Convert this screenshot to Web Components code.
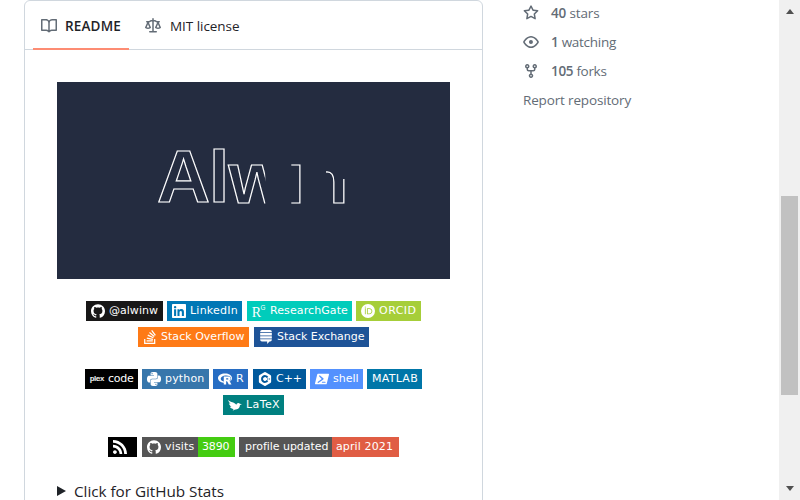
<!DOCTYPE html>
<html lang="en"><head><meta charset="utf-8"><title>alwinw</title>
<style>
html,body{margin:0;height:100%;overflow:hidden;background:#fff}
body{font:13.5px/20px "Open Sans","Noto Sans",sans-serif;color:#1f2328}
</style></head><body>
<profile-page></profile-page>
<script>
const ICONS={
book:['0 0 16 16','<path d="M0 1.75A.75.75 0 0 1 .75 1h4.253c1.227 0 2.317.59 3 1.501A3.743 3.743 0 0 1 11.006 1h4.245a.75.75 0 0 1 .75.75v10.5a.75.75 0 0 1-.75.75h-4.507a2.25 2.25 0 0 0-1.591.659l-.622.621a.75.75 0 0 1-1.06 0l-.622-.621A2.25 2.25 0 0 0 5.258 13H.75a.75.75 0 0 1-.75-.75Zm7.251 10.324.004-5.073-.002-2.253A2.25 2.25 0 0 0 5.003 2.5H1.5v9h3.757a3.75 3.75 0 0 1 1.994.574ZM8.755 4.75l-.004 7.322a3.752 3.752 0 0 1 1.992-.572H14.5v-9h-3.495a2.25 2.25 0 0 0-2.25 2.25Z"/>'],
law:['0 0 16 16','<path d="M8.75.75V2h.985c.304 0 .603.08.867.231l1.29.736c.038.022.08.033.124.033h2.234a.75.75 0 0 1 0 1.5h-.427l2.111 4.692a.75.75 0 0 1-.154.838l-.53-.53.529.531-.001.002-.002.002-.006.006-.016.015-.045.04c-.21.176-.441.327-.686.45C14.556 10.78 13.88 11 13 11a4.498 4.498 0 0 1-2.023-.454 3.544 3.544 0 0 1-.686-.45l-.045-.04-.016-.015-.006-.006-.004-.004v-.001a.75.75 0 0 1-.154-.838L12.178 4.5h-.162c-.305 0-.604-.079-.868-.231l-1.29-.736a.245.245 0 0 0-.124-.033H8.75V13h2.5a.75.75 0 0 1 0 1.5h-6.5a.75.75 0 0 1 0-1.5h2.5V3.5h-.984a.245.245 0 0 0-.124.033l-1.289.737c-.265.15-.564.23-.869.23h-.162l2.112 4.692a.75.75 0 0 1-.154.838l-.53-.53.529.531-.001.002-.002.002-.006.006-.016.015-.045.04c-.21.176-.441.327-.686.45C4.556 10.78 3.88 11 3 11a4.498 4.498 0 0 1-2.023-.454 3.544 3.544 0 0 1-.686-.45l-.045-.04-.016-.015-.006-.006-.004-.004v-.001a.75.75 0 0 1-.154-.838L2.178 4.5H1.75a.75.75 0 0 1 0-1.5h2.234a.249.249 0 0 0 .125-.033l1.288-.737c.265-.15.564-.23.869-.23h.984V.75a.75.75 0 0 1 1.5 0Zm2.945 8.477c.285.135.718.273 1.305.273s1.02-.138 1.305-.273L13 6.327Zm-10 0c.285.135.718.273 1.305.273s1.02-.138 1.305-.273L3 6.327Z"/>'],
star:['0 0 16 16','<path d="M8 .25a.75.75 0 0 1 .673.418l1.882 3.815 4.21.612a.75.75 0 0 1 .416 1.279l-3.046 2.97.719 4.192a.751.751 0 0 1-1.088.791L8 12.347l-3.766 1.98a.75.75 0 0 1-1.088-.79l.72-4.194L.818 6.374a.75.75 0 0 1 .416-1.28l4.21-.611L7.327.668A.75.75 0 0 1 8 .25Zm0 2.445L6.615 5.5a.75.75 0 0 1-.564.41l-3.097.45 2.24 2.184a.75.75 0 0 1 .216.664l-.528 3.084 2.769-1.456a.75.75 0 0 1 .698 0l2.77 1.456-.53-3.084a.75.75 0 0 1 .216-.664l2.24-2.183-3.096-.45a.75.75 0 0 1-.564-.41L8 2.694Z"/>'],
eye:['0 0 16 16','<path d="M8 2c1.981 0 3.671.992 4.933 2.078 1.27 1.091 2.187 2.345 2.637 3.023a1.62 1.62 0 0 1 0 1.798c-.45.678-1.367 1.932-2.637 3.023C11.67 13.008 9.981 14 8 14c-1.981 0-3.671-.992-4.933-2.078C1.797 10.83.88 9.576.43 8.898a1.62 1.62 0 0 1 0-1.798c.45-.677 1.367-1.931 2.637-3.022C4.33 2.992 6.019 2 8 2ZM1.679 7.932a.12.12 0 0 0 0 .136c.411.622 1.241 1.75 2.366 2.717C5.176 11.758 6.527 12.5 8 12.5c1.473 0 2.825-.742 3.955-1.715 1.124-.967 1.954-2.096 2.366-2.717a.12.12 0 0 0 0-.136c-.412-.621-1.242-1.75-2.366-2.717C10.824 4.242 9.473 3.5 8 3.5c-1.473 0-2.825.742-3.955 1.715-1.124.967-1.954 2.096-2.366 2.717ZM8 10a2 2 0 1 1-.001-3.999A2 2 0 0 1 8 10Z"/>'],
fork:['0 0 16 16','<path d="M5 5.372v.878c0 .414.336.75.75.75h4.5a.75.75 0 0 0 .75-.75v-.878a2.25 2.25 0 1 1 1.5 0v.878a2.25 2.25 0 0 1-2.25 2.25h-1.5v2.128a2.251 2.251 0 1 1-1.5 0V8.5h-1.5A2.25 2.25 0 0 1 3.5 6.25v-.878a2.25 2.25 0 1 1 1.5 0ZM5 3.25a.75.75 0 1 0-1.5 0 .75.75 0 0 0 1.5 0Zm6.75.75a.75.75 0 1 0 0-1.5.75.75 0 0 0 0 1.5Zm-3 8.75a.75.75 0 1 0-1.5 0 .75.75 0 0 0 1.5 0Z"/>'],
github:['0 0 24 24','<path d="M12 .297c-6.63 0-12 5.373-12 12 0 5.303 3.438 9.8 8.205 11.385.6.113.82-.258.82-.577 0-.285-.01-1.04-.015-2.04-3.338.724-4.042-1.61-4.042-1.61C4.422 18.07 3.633 17.7 3.633 17.7c-1.087-.744.084-.729.084-.729 1.205.084 1.838 1.236 1.838 1.236 1.07 1.835 2.809 1.305 3.495.998.108-.776.417-1.305.76-1.605-2.665-.3-5.466-1.332-5.466-5.93 0-1.31.465-2.38 1.235-3.22-.135-.303-.54-1.523.105-3.176 0 0 1.005-.322 3.3 1.23.96-.267 1.98-.399 3-.405 1.02.006 2.04.138 3 .405 2.28-1.552 3.285-1.23 3.285-1.23.645 1.653.24 2.873.12 3.176.765.84 1.23 1.91 1.23 3.22 0 4.61-2.805 5.625-5.475 5.92.42.36.81 1.096.81 2.22 0 1.606-.015 2.896-.015 3.286 0 .315.21.69.825.57C20.565 22.092 24 17.592 24 12.297c0-6.627-5.373-12-12-12"/>'],
linkedin:['0 0 24 24','<path d="M20.447 20.452h-3.554v-5.569c0-1.328-.027-3.037-1.852-3.037-1.853 0-2.136 1.445-2.136 2.939v5.667H9.351V9h3.414v1.561h.046c.477-.9 1.637-1.85 3.37-1.85 3.601 0 4.267 2.37 4.267 5.455v6.286zM5.337 7.433a2.062 2.062 0 0 1-2.063-2.065 2.064 2.064 0 1 1 2.063 2.065zm1.782 13.019H3.555V9h3.564v11.452zM22.225 0H1.771C.792 0 0 .774 0 1.729v20.542C0 23.227.792 24 1.771 24h20.451C23.2 24 24 23.227 24 22.271V1.729C24 .774 23.2 0 22.222 0h.003z"/>'],
rg:['0 0 24 24','<g style="font-family:Liberation Serif"><text x="-.5" y="23" font-size="25" textLength="16" lengthAdjust="spacingAndGlyphs">R</text><text x="14.5" y="9.6" font-size="13" textLength="8.500" lengthAdjust="spacingAndGlyphs" style="font-family:Liberation Sans">G</text></g>'],
orcid:['0 0 24 24','<path fill-rule="evenodd" d="M12 0a12 12 0 1 0 0 24a12 12 0 0 0 0-24ZM7.37 4.38a.95.95 0 1 1 0 1.9a.95.95 0 0 1 0-1.9ZM6.65 7.42H8.1v10.04H6.65ZM10.2 7.42h3.9c3.72 0 5.35 2.65 5.35 5.02c0 2.58-2.01 5.02-5.33 5.02H10.2ZM11.65 8.72v7.44h2.3c3.27 0 4.02-2.48 4.02-3.72c0-2.02-1.28-3.72-4.1-3.72Z"/>'],
so:['0 0 24 24','<path d="M15.725 0l-1.72 1.277 6.39 8.588 1.716-1.277L15.725 0zm-3.94 3.418l-1.369 1.644 8.225 6.85 1.369-1.644-8.225-6.85zm-3.15 4.465l-.905 1.94 9.702 4.517.904-1.94-9.701-4.517zm-1.85 4.86l-.44 2.093 10.473 2.201.44-2.092-10.473-2.203zM1.89 15.47V24h19.19v-8.53h-2.133v6.397H4.021v-6.396H1.89zm4.265 2.133v2.13h10.66v-2.13H6.154Z"/>'],
se:['0 0 24 24','<path d="M5 0h14a3 3 0 0 1 3 3v1H2V3a3 3 0 0 1 3-3ZM2 5.3h20v4H2ZM2 10.6h20v4H2ZM2 15.9h20v1a3 3 0 0 1-3 3h-1L14 24v-4.1H5a3 3 0 0 1-3-3Z"/>'],
plex:['0 0 24 24','<text x="0" y="15" font-size="11.5" textLength="24" lengthAdjust="spacingAndGlyphs" stroke="currentColor" stroke-width=".4" style="font-family:Liberation Sans">plex</text>'],
python:['0 0 24 24','<path d="M14.25.18l.9.2.73.26.59.3.45.32.34.34.25.34.16.33.1.3.04.26.02.2-.01.13V8.5l-.05.63-.13.55-.21.46-.26.38-.3.31-.33.25-.35.19-.35.14-.33.1-.3.07-.26.04-.21.02H8.77l-.69.05-.59.14-.5.22-.41.27-.33.32-.27.35-.2.36-.15.37-.1.35-.07.32-.04.27-.02.21v3.06H3.17l-.21-.03-.28-.07-.32-.12-.35-.18-.36-.26-.36-.36-.35-.46-.32-.59-.28-.73-.21-.88-.14-1.05-.05-1.23.06-1.22.16-1.04.24-.87.32-.71.36-.57.4-.44.42-.33.42-.24.4-.16.36-.1.32-.05.24-.01h.16l.06.01h8.16v-.83H6.18l-.01-2.75-.02-.37.05-.34.11-.31.17-.28.25-.26.31-.23.38-.2.44-.18.51-.15.58-.12.64-.1.71-.06.77-.04.84-.02 1.27.05zm-6.3 1.98l-.23.33-.08.41.08.41.23.34.33.22.41.09.41-.09.33-.22.23-.34.08-.41-.08-.41-.23-.33-.33-.22-.41-.09-.41.09zm13.09 3.95l.28.06.32.12.35.18.36.27.36.35.35.47.32.59.28.73.21.88.14 1.04.05 1.23-.06 1.23-.16 1.04-.24.86-.32.71-.36.57-.4.45-.42.33-.42.24-.4.16-.36.09-.32.05-.24.02-.16-.01h-8.22v.82h5.84l.01 2.76.02.36-.05.34-.11.31-.17.29-.25.25-.31.24-.38.2-.44.17-.51.15-.58.13-.64.09-.71.07-.77.04-.84.01-1.27-.04-1.07-.14-.9-.2-.73-.25-.59-.3-.45-.33-.34-.34-.25-.34-.16-.33-.1-.3-.04-.25-.02-.2.01-.13v-5.34l.05-.64.13-.54.21-.46.26-.38.3-.32.33-.24.35-.2.35-.14.33-.1.3-.06.26-.04.21-.02.13-.01h5.84l.69-.05.59-.14.5-.21.41-.28.33-.32.27-.35.2-.36.15-.36.1-.35.07-.32.04-.28.02-.21V6.07h2.09l.14.01zm-6.47 14.25l-.23.33-.08.41.08.41.23.33.33.23.41.08.41-.08.33-.23.23-.33.08-.41-.08-.41-.23-.33-.33-.23-.41-.08-.41.08z"/>'],
r:['0 0 24 24','<path d="M12 2.746c-6.627 0-12 3.599-12 8.037 0 3.897 4.144 7.144 9.64 7.88V16.26c-2.924-.915-4.925-2.755-4.925-4.877 0-3.035 4.084-5.494 9.12-5.494 5.038 0 8.757 1.683 8.757 5.494 0 1.976-.999 3.379-2.662 4.272.09.066.174.128.258.216.169.149.25.363.372.544 2.128-1.45 3.44-3.437 3.44-5.631 0-4.44-5.373-8.038-12-8.038zm-2.111 4.99v13.516l4.093-.002-.002-5.291h1.1c.225 0 .321.066.549.25.272.22.715.982.715.982l2.164 4.063 4.627-.002-2.864-4.826s-.086-.193-.265-.383a2.22 2.22 0 0 0-.582-.416c-.422-.214-1.149-.434-1.149-.434s3.578-.264 3.578-3.826c0-3.562-3.744-3.63-3.744-3.63zm4.127 2.93l2.478.002s1.149-.062 1.149 1.127c0 1.165-1.149 1.17-1.149 1.17h-2.478z"/>'],
cpp:['0 0 24 24','<path fill-rule="evenodd" d="M10.8.5a2.5 2.5 0 0 1 2.4 0l8 4.7a2.5 2.5 0 0 1 1.3 2.1v9.4a2.5 2.5 0 0 1-1.3 2.1l-8 4.7a2.5 2.5 0 0 1-2.4 0l-8-4.7a2.5 2.5 0 0 1-1.3-2.1V7.3a2.5 2.5 0 0 1 1.3-2.1ZM17.7 8.6A6.7 6.7 0 1 0 17.7 15.4L14.8 13.7A3.3 3.3 0 1 1 14.8 10.3ZM17 11.6v-.8h-.8v.8h-.8v.8h.8v.8h.8v-.8h.8v-.8ZM20 11.6v-.8h-.8v.8h-.8v.8h.8v.8h.8v-.8h.8v-.8Z"/>'],
shell:['0 0 24 24','<path fill-rule="evenodd" d="M23.2 3c.6 0 1 .5.8 1.1L20.1 20.1a1.3 1.3 0 0 1-1.2.9H.8c-.6 0-1-.5-.8-1.1L3.900 3.900A1.300 1.300 0 0 1 5.100 3ZM8.600 5.800a1.100 1.100 0 0 0-1.300 1.700l4.200 4.500-6.500 4.700a1.150 1.150 0 0 0 1.300 1.900l8-5.900a1.200 1.200 0 0 0 0-1.800ZM12.600 16.500a.9.9 0 0 0 0 1.800h4.700a.9.9 0 0 0 0-1.800Z"/>'],
latex:['0 0 24 24','<path d="M0 3.500C4 7 8 6.800 12 9.500l2.300 2.100c.5-1.800 1.500-2.900 3.300-3.100 1.200-.1 2 .5 2.700 1.400L24 10.500l-3.500 1.400c-.1 3.200-2 6.500-5.200 7.500-1.600.5-3 .3-4 .8L8 22l1.500-3.300C6.500 18.500 4.300 17 3.300 14.800l2.600.2C3.500 13 1.900 11 1.500 8.800l3 1.500C2.500 8.300.8 6 0 3.500Z"/>'],
rss:['0 0 24 24','<path d="M19.199 24C19.199 13.467 10.533 4.800 0 4.800V0c13.165 0 24 10.835 24 24h-4.801zM3.291 17.415c1.814 0 3.293 1.479 3.293 3.295 0 1.813-1.485 3.290-3.301 3.290C1.470 24 0 22.526 0 20.710s1.475-3.294 3.291-3.295zM15.909 24h-4.665c0-6.169-5.075-11.245-11.244-11.245V8.090c8.727 0 15.909 7.184 15.909 15.910z"/>']
};
class Base extends HTMLElement{
  constructor(){super();this.attachShadow({mode:'open'})}
}
customElements.define('ui-icon',class extends Base{
  connectedCallback(){
    const [vb,body]=ICONS[this.getAttribute('name')],s=this.getAttribute('size')||16;
    this.shadowRoot.innerHTML=`<style>:host{display:block;flex:none;width:${s}px;height:${s}px}svg{display:block;fill:currentColor;overflow:visible}</style><svg width="${s}" height="${s}" viewBox="${vb}">${body}</svg>`;
  }
});
/* Text run whose tracking is adjusted so that it spans the given width. */
customElements.define('fit-text',class extends Base{
  connectedCallback(){
    const w=+this.getAttribute('w');
    this.shadowRoot.innerHTML=`<style>:host{display:block;flex:none;width:${w}px;white-space:nowrap}span{display:inline-block}</style><span><slot></slot></span>`;
    requestAnimationFrame(()=>this.fit(w));this.fit(w);
  }
  fit(w){
    const s=this.shadowRoot.querySelector('span');
    s.style.letterSpacing='0px';
    const n=this.textContent.length,d=w-s.getBoundingClientRect().width;
    if(n>1)s.style.letterSpacing=d/n+'px';
  }
});
customElements.define('shield-badge',class extends Base{
  connectedCallback(){
    const a=k=>this.getAttribute(k),icon=a('icon'),label=a('label'),value=a('value');
    this.shadowRoot.innerHTML=`<style>
    :host{display:flex;flex:none;height:20px;width:${a('w')}px;color:#fff;background:${a('bg')};font:11px/20px "DejaVu Sans",sans-serif}
    .l{display:flex;flex:1;align-items:center;gap:4px;padding-left:${icon?5:a('pad')||6}px}
    .v{width:${a('vw')}px;box-sizing:border-box;padding-left:4px;background:${a('vbg')}}
    </style><div class="l">${icon?`<ui-icon name="${icon}" size="14"></ui-icon>`:''}${label?`<fit-text w="${a('lw')}">${label}</fit-text>`:''}</div>${value?`<div class="v"><fit-text w="${a('tw')}">${value}</fit-text></div>`:''}`;
  }
});
customElements.define('badge-row',class extends Base{
  connectedCallback(){
    this.shadowRoot.innerHTML=`<style>:host{display:flex;justify-content:flex-start;gap:4px;height:20px;padding-left:${this.getAttribute('indent')}px;margin-bottom:${this.getAttribute('after')||6}px}</style><slot></slot>`;
  }
});
customElements.define('tab-item',class extends Base{
  connectedCallback(){
    this.shadowRoot.innerHTML=`<style>
    :host{display:flex;box-sizing:border-box;height:49px;padding:3px 8px 0;align-items:center;gap:8px;border-bottom:2px solid transparent}
    :host([active]){border-color:#fd8c73;font-weight:600}
    ui-icon{color:#636c76}
    </style><ui-icon name="${this.getAttribute('icon')}"></ui-icon><slot></slot>`;
  }
});
customElements.define('name-banner',class extends Base{
  connectedCallback(){
    this.shadowRoot.innerHTML=`<style>:host{display:block;width:393px;height:197px;background:#242c40}svg{display:block}text{fill:none;stroke:#fff;stroke-width:1.2;font-family:"Liberation Sans",sans-serif;font-weight:700}</style>
    <svg width="393" height="197" viewBox="57 82 393 197">
    <clipPath id="w"><path d="M220 140H265.300V210H220Z"/></clipPath>
    <clipPath id="i"><path d="M291.300 160H310V210H291.300Z"/></clipPath>
    <clipPath id="n"><path d="M326 169H340V179H350V210H326Z"/></clipPath>
    <text transform="translate(157 202) scale(.98 1)" font-size="75">A</text>
    <text x="209" y="202" font-size="72.500">l</text>
    <g clip-path="url(#w)"><text x="228.400" y="202.800" font-size="73">w</text></g>
    <g clip-path="url(#i)"><text x="284.800" y="202.800" font-size="73">i</text></g>
    <g clip-path="url(#n)"><text x="303.700" y="202.800" font-size="73">n</text></g>
    </svg>`;
  }
});
customElements.define('readme-box',class extends Base{
  connectedCallback(){
    this.shadowRoot.innerHTML=`<style>
    :host{display:block;box-sizing:border-box;width:459px;height:520px;border:1px solid #d0d7de;border-radius:6px}
    nav{display:flex;gap:8px;height:48px;padding-left:8px;border-bottom:1px solid #d0d7de}
    main{padding:32px 0 0 32px}
    .b{margin:22px 0 0 -57px}
    .sum{display:flex;align-items:center;gap:8px;margin-top:26px;height:16px;font-size:15.300px;line-height:16px}
    .sum i{width:0;height:0;border:5px solid transparent;border-left:9px solid #1f2328;border-right:0}
    .sum fit-text{margin-top:-1px}
    </style>
    <nav><tab-item active icon="book"><fit-text w="56">README</fit-text></tab-item><tab-item icon="law"><fit-text w="69.500" style="margin-left:1px">MIT license</fit-text></tab-item></nav>
    <main><name-banner></name-banner>
    <div class="b">
    <badge-row indent="86">
      <shield-badge w="77" bg="#181717" icon="github" label="@alwinw" lw="49"></shield-badge>
      <shield-badge w="75" bg="#0077b5" icon="linkedin" label="LinkedIn" lw="48"></shield-badge>
      <shield-badge style="margin-left:1px" w="105" bg="#00ccbb" icon="rg" label="ResearchGate" lw="78"></shield-badge>
      <shield-badge w="65" bg="#a6ce39" icon="orcid" label="ORCID" lw="37.500"></shield-badge>
    </badge-row>
    <badge-row indent="138" after="22">
      <shield-badge w="111" bg="#fe7a16" icon="so" label="Stack Overflow" lw="83.500"></shield-badge>
      <shield-badge style="margin-left:1px" w="115" bg="#1e5397" icon="se" label="Stack Exchange" lw="87.500"></shield-badge>
    </badge-row>
    <badge-row indent="85">
      <shield-badge w="53" bg="#000" icon="plex" label="code" lw="25.500"></shield-badge>
      <shield-badge w="67" bg="#3776ab" icon="python" label="python" lw="39.500"></shield-badge>
      <shield-badge w="35" bg="#276dc3" icon="r" label="R" lw="8"></shield-badge>
      <shield-badge style="margin-left:1px" w="53" bg="#00599c" icon="cpp" label="C++" lw="26"></shield-badge>
      <shield-badge w="53" bg="#5391fe" icon="shell" label="shell" lw="25.500"></shield-badge>
      <shield-badge w="55" bg="#0076a8" pad="5" label="MATLAB" lw="46"></shield-badge>
    </badge-row>
    <badge-row indent="223" after="22">
      <shield-badge w="61" bg="#008080" icon="latex" label="LaTeX" lw="34"></shield-badge>
    </badge-row>
    <badge-row indent="108">
      <shield-badge w="29" bg="#000" icon="rss"></shield-badge>
      <shield-badge style="margin-left:1px" w="93" bg="#555" icon="github" label="visits" lw="29.500" value="3890" vw="37" vbg="#4c1" tw="27.500"></shield-badge>
      <shield-badge w="160" bg="#555" label="profile updated" lw="83.500" value="april 2021" vw="67" vbg="#e05d44" tw="57"></shield-badge>
    </badge-row>
    </div>
    <div class="sum"><i></i><fit-text w="150">Click for GitHub Stats</fit-text></div>
    </main>`;
  }
});
customElements.define('stat-line',class extends Base{
  connectedCallback(){
    this.shadowRoot.innerHTML=`<style>:host{display:flex;align-items:center;height:20px;gap:12px;margin-bottom:9px}</style><ui-icon name="${this.getAttribute('icon')}"></ui-icon><slot></slot>`;
  }
});
customElements.define('repo-stats',class extends Base{
  connectedCallback(){
    this.shadowRoot.innerHTML=`<style>:host{display:block;padding-top:3px;color:#636c76}b{font-weight:600}</style>
    <stat-line icon="star"><fit-text w="48.500"><b>40</b> stars</fit-text></stat-line>
    <stat-line icon="eye"><fit-text w="65"><b>1</b> watching</fit-text></stat-line>
    <stat-line icon="fork"><fit-text w="55.500"><b>105</b> forks</fit-text></stat-line>
    <fit-text w="108">Report repository</fit-text>`;
  }
});
customElements.define('scroll-track',class extends Base{
  connectedCallback(){
    this.shadowRoot.innerHTML=`<style>:host{display:flex;flex-direction:column;align-items:center;box-sizing:border-box;width:21px;height:500px;padding:9px 0 9px;background:#f0f0f0}
    i{width:0;height:0;border:4.500px solid transparent}.u{border-bottom:5px solid #505050;border-top:0}.d{border-top:5px solid #505050;border-bottom:0;margin-top:auto}
    div{width:17px;height:199px;margin:182px 0 0;background:#c1c1c1}</style><i class="u"></i><div></div><i class="d"></i>`;
  }
});
customElements.define('profile-page',class extends Base{
  connectedCallback(){
    this.shadowRoot.innerHTML=`<style>:host{display:flex;width:800px;height:500px;overflow:hidden;box-sizing:border-box;padding-left:24px}repo-stats{margin-left:40px}scroll-track{margin-left:auto}</style><readme-box></readme-box><repo-stats></repo-stats><scroll-track></scroll-track>`;
  }
});
</script>
</body></html>
